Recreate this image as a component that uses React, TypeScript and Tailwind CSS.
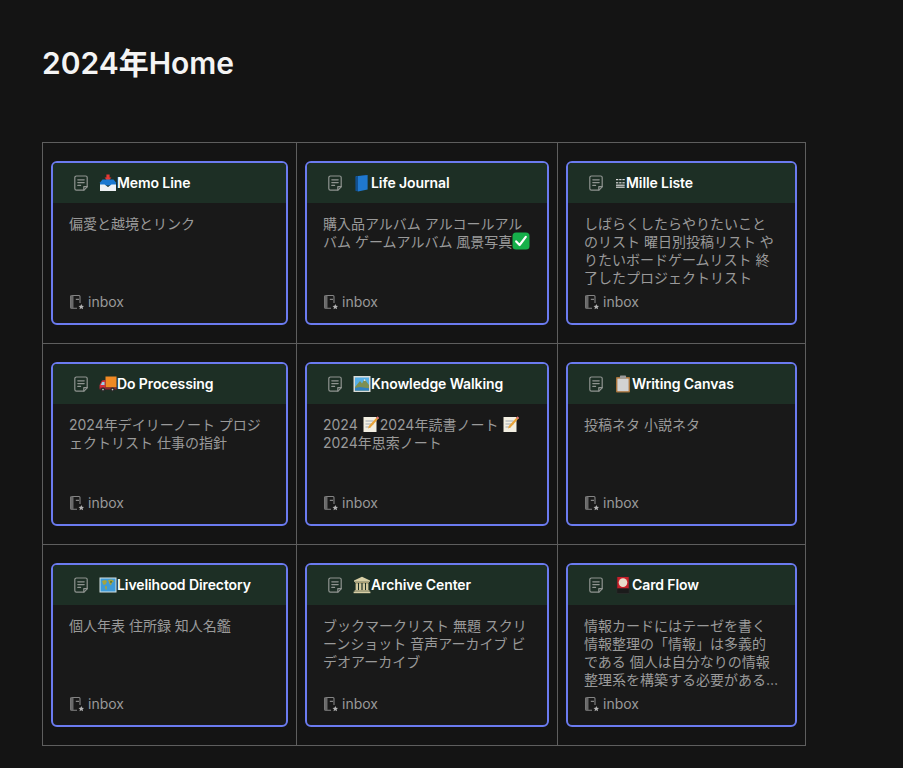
import React from "react";

const DocIcon = () => (
  <svg width="16" height="16" viewBox="0 0 16 16" fill="none" stroke="#8f9490" strokeWidth="1.2" strokeLinecap="round" strokeLinejoin="round" className="shrink-0">
    <path d="M3.4 1h9.2a1.6 1.6 0 0 1 1.6 1.6v9.2L11 15.2H3.4a1.6 1.6 0 0 1-1.6-1.6V2.6A1.6 1.6 0 0 1 3.4 1z" />
    <path d="M14.2 11.6h-3.4v3.4" />
    <path d="M4.8 4.8h6.4M4.8 7.6h6.4M4.8 10.4h2.8" />
  </svg>
);

const FootIcon = () => (
  <svg width="15" height="16" viewBox="0 0 15 16" fill="none" className="shrink-0">
    <path d="M2.6 1.5H10a1 1 0 0 1 1 1V9" stroke="#858585" strokeWidth="1.1" />
    <path d="M8 14.2H2.6a1 1 0 0 1-1-1V2.5a1 1 0 0 1 1-1" stroke="#858585" strokeWidth="1.1" />
    <rect x="1.6" y="1.6" width="2.9" height="12.4" fill="#6a6a6a" />
    <path d="M6.8 5.4h3.2" stroke="#858585" strokeWidth="1.1" />
    <path d="M12.3 10l.8 1.8 2 .2-1.5 1.3.5 2-1.8-1.1-1.8 1.1.5-2L9.5 12l2-.2z" fill="#b4b4b4" />
  </svg>
);

const Inbox = () => (
  <svg width="18" height="18" viewBox="0 0 18 18" className="shrink-0">
    <rect x="7.4" y="0.5" width="3.2" height="5" fill="#e53935" />
    <path d="M5.6 3.6h6.8L9 7.6z" fill="#e53935" />
    <path d="M1 8.5 3.5 5.6h11L17 8.5v3H1z" fill="#1b78d0" />
    <path d="M1 10.5h4.5L9 13l3.5-2.5H17V17H1z" fill="#eef1f4" />
  </svg>
);
const Book = () => (
  <svg width="18" height="18" viewBox="0 0 18 18" className="shrink-0">
    <path d="M2.6 3 13 .8v13.6L3.2 17z" fill="#0f3a68" />
    <path d="M2.8 2.2 14.6 1v14.4L5 17.4z" fill="#1f78cf" />
    <path d="M2.4 2.4 5 2v15.4l-2.6-.6z" fill="#12508f" />
  </svg>
);
const Bars = () => (
  <svg width="12" height="18" viewBox="0 0 12 18" className="shrink-0">
    <g fill="#d8d8d8">
      <rect x="2" y="5" width="2.3" height="1.2" /><rect x="5.2" y="5" width="2.3" height="1.2" /><rect x="8.4" y="5" width="2.3" height="1.2" />
      <rect x="2" y="8.2" width="2.3" height="1.2" /><rect x="5.2" y="8.2" width="2.3" height="1.2" /><rect x="8.4" y="8.2" width="2.3" height="1.2" />
      <rect x="2" y="10.6" width="8.7" height="1.2" /><rect x="2" y="12.6" width="8.7" height="1.2" />
    </g>
  </svg>
);
const Truck = () => (
  <svg width="18" height="18" viewBox="0 0 18 18" className="shrink-0">
    <rect x="6.5" y="1.5" width="11" height="11" fill="#f08a24" />
    <path d="M6.5 5 3 5.6.6 10v3.5h5.9z" fill="#d6303c" />
    <path d="M3.2 7h2.3v3H1.8z" fill="#9ad0ea" />
    <rect x="0.6" y="12.5" width="17" height="2" fill="#8a2530" />
    <circle cx="4" cy="14.6" r="2.2" fill="#2b2b2b" /><circle cx="4" cy="14.6" r=".8" fill="#ccc" />
    <circle cx="13.5" cy="14.6" r="2.2" fill="#2b2b2b" /><circle cx="13.5" cy="14.6" r=".8" fill="#ccc" />
  </svg>
);
const Landscape = () => (
  <svg width="18" height="18" viewBox="0 0 18 18" className="shrink-0">
    <rect x="0.5" y="1" width="17" height="16" fill="#d9dcd9" />
    <rect x="2" y="2.5" width="14" height="13" fill="#56b0e8" />
    <path d="M2 12 7 6l2 2.4L11.5 4 16 10v5.5H2z" fill="#7d8f52" />
    <path d="M2 13l5-1 9 1.2v2.3H2z" fill="#2f7fc0" />
    <path d="M10.6 5.2 11.5 4l1.2 1.6-1 .5z" fill="#eef2f0" />
  </svg>
);
const Clipboard = () => (
  <svg width="18" height="18" viewBox="0 0 18 18" className="shrink-0">
    <rect x="2" y="2" width="14" height="15.5" rx="1" fill="#a9743c" />
    <rect x="3.4" y="3.6" width="11.2" height="12.6" fill="#d2d2d2" />
    <rect x="6" y="0.6" width="6" height="3.2" rx=".6" fill="#9a9a9a" />
  </svg>
);
const WorldMap = () => (
  <svg width="18" height="18" viewBox="0 0 18 18" className="shrink-0">
    <rect x="0.5" y="1.5" width="17" height="15" fill="#d6e2e4" />
    <rect x="1.5" y="2.5" width="15" height="13" fill="#3f9bd8" />
    <path d="M3 5l3-1 2 1-1 3 -2 1-1-1zM9 4l4-.5 2 2-2 1-1 3-1.5-1.5zM6 10l2 .5-.5 3.5-1.2-1z" fill="#a7a43c" />
    <path d="M11 5.5l1.6-.6.4 1.4-1.4.6z" fill="#4a6a2e" />
  </svg>
);
const Temple = () => (
  <svg width="18" height="18" viewBox="0 0 18 18" className="shrink-0">
    <path d="M9 .8 17 4.6v1.2H1V4.6z" fill="#d8cfa6" />
    <rect x="2" y="6" width="14" height="1" fill="#a79c72" />
    <g fill="#d3c99f"><rect x="2.6" y="7.2" width="2.4" height="7" /><rect x="6" y="7.2" width="2.4" height="7" /><rect x="9.6" y="7.2" width="2.4" height="7" /><rect x="13" y="7.2" width="2.4" height="7" /></g>
    <rect x="1.6" y="14.2" width="14.8" height="1.4" fill="#c4ba90" />
    <rect x="0.6" y="15.6" width="16.8" height="1.6" fill="#d8cfa6" />
  </svg>
);
const Hanafuda = () => (
  <svg width="18" height="18" viewBox="0 0 18 18" className="shrink-0">
    <rect x="2.5" y="0.2" width="13" height="17.6" rx="1" fill="#2a2a2a" />
    <rect x="3.3" y="1" width="11.4" height="11.5" fill="#c8202a" />
    <circle cx="9" cy="6.6" r="4.3" fill="#e8dccb" />
    <path d="M3.3 12.5h11.4v4.5H3.3z" fill="#1b1b1b" />
  </svg>
);
const Memo = () => (
  <svg width="18" height="18" viewBox="0 0 18 18" className="inline-block -my-1 align-[1px]">
    <rect x="1.5" y="2" width="13" height="15" fill="#f3efe2" />
    <path d="M3.5 6h8M3.5 9h8M3.5 12h5" stroke="#9aa3ad" strokeWidth=".9" />
    <path d="M15.5 1.5 17 3 8.5 12.5 6 13.5l.8-2.6z" fill="#e8a33a" />
    <path d="M15.5 1.5 17 3l-1.2 1.3-1.5-1.5z" fill="#e06a7a" />
  </svg>
);
const Check = () => (
  <svg width="18" height="18" viewBox="0 0 18 18" className="inline-block -my-1 align-[1px]">
    <rect x="0.5" y="0.5" width="17" height="17" rx="3.5" fill="#16b04a" />
    <path d="M4.2 9.4 7.6 13l6.2-8.2" fill="none" stroke="#fff" strokeWidth="2.2" strokeLinecap="round" strokeLinejoin="round" />
  </svg>
);

type Card = { icon: React.ReactNode; title: string; body: React.ReactNode };

const cards: Card[] = [
  { icon: <Inbox />, title: "Memo Line", body: "偏愛と越境とリンク" },
  { icon: <Book />, title: "Life Journal", body: <>購入品アルバム アルコールアルバム ゲームアルバム 風景写真<Check /></> },
  { icon: <Bars />, title: "Mille Liste", body: "しばらくしたらやりたいことのリスト 曜日別投稿リスト やりたいボードゲームリスト 終了したプロジェクトリスト" },
  { icon: <Truck />, title: "Do Processing", body: "2024年デイリーノート プロジェクトリスト 仕事の指針" },
  { icon: <Landscape />, title: "Knowledge Walking", body: <>2024 <Memo />2024年読書ノート <Memo />2024年思索ノート</> },
  { icon: <Clipboard />, title: "Writing Canvas", body: "投稿ネタ 小説ネタ" },
  { icon: <WorldMap />, title: "Livelihood Directory", body: "個人年表 住所録 知人名鑑" },
  { icon: <Temple />, title: "Archive Center", body: "ブックマークリスト 無題 スクリーンショット 音声アーカイブ ビデオアーカイブ" },
  { icon: <Hanafuda />, title: "Card Flow", body: "情報カードにはテーゼを書く 情報整理の「情報」は多義的である 個人は自分なりの情報整理系を構築する必要がある…" },
];

export default function App() {
  return (
    <div className="min-h-screen bg-[#141414] pl-[42px] pt-[42px] font-['Inter','Noto_Sans_CJK_JP',sans-serif]">
      <h1 className="text-[30px] leading-[42px] font-semibold text-[#f4f4f4] h-[100px]">2024年Home</h1>
      <div className="grid grid-cols-[254px_261px_248px] w-[764px] border-l border-t border-[#5e5e5e]">
        {cards.map((c) => (
          <div key={c.title} className="border-r border-b border-[#5e5e5e] px-2 pt-[18px] pb-[18px]">
            <div className="h-[164px] rounded-[6px] border-2 border-[#6b7bf0] bg-[#191919] overflow-hidden flex flex-col">
              <div className="h-10 shrink-0 bg-[#1d2f25] flex items-center pl-[20px]">
                <DocIcon />
                <div className="flex items-center ml-[10px] text-sm font-semibold tracking-[-0.1px] text-white">
                  {c.icon}
                  <span>{c.title}</span>
                </div>
              </div>
              <div className="flex-1 px-4 pt-3 flex flex-col">
                <div className="h-[72px] text-sm leading-[18px] text-[#9a9a9a]">{c.body}</div>
                <div className="mt-[6px] flex items-center gap-1 text-sm leading-[18px] text-[#9a9a9a]">
                  <FootIcon />
                  <span>inbox</span>
                </div>
              </div>
            </div>
          </div>
        ))}
      </div>
    </div>
  );
}
